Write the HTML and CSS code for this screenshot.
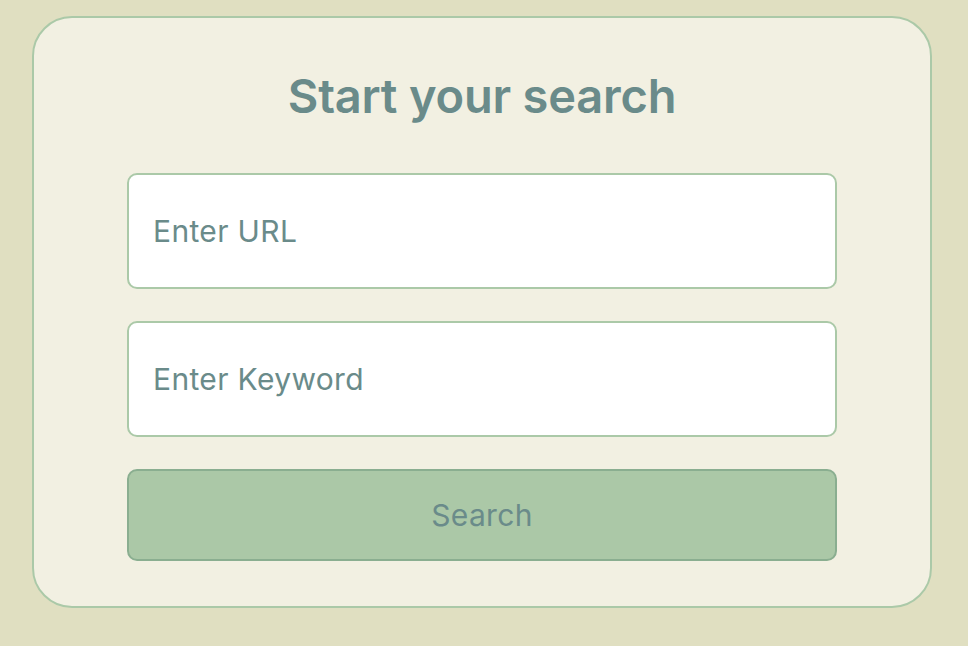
FILE: index.html
```html
<!DOCTYPE html>
<html lang="en">
<head>
<meta charset="utf-8">
<title>Start your search</title>
<link rel="stylesheet" href="styles.css">
</head>
<body>
<main class="card">
  <h1 class="title">Start your search</h1>
  <form class="form">
    <input class="field" type="text" placeholder="Enter URL">
    <input class="field" type="text" placeholder="Enter Keyword">
    <button class="btn" type="button">Search</button>
  </form>
</main>
</body>
</html>
```

FILE: styles.css
```css
* { box-sizing: border-box; }
html, body { margin: 0; padding: 0; }
body {
  background: #e0dfc1;
  font-family: Inter, "Noto Sans", sans-serif;
  padding: 16px 36px 38px 32px;
  height: 646px;
}
.card {
  width: 900px;
  height: 592px;
  background: #f2f0e2;
  border: 2px solid #abc9a8;
  border-radius: 40px;
  padding: 50px 93px 0 93px;
  display: flex;
  flex-direction: column;
  align-items: stretch;
}
.title {
  margin: 0 0 49px 0;
  text-align: center;
  color: #6a8b8a;
  font-size: 47px;
  font-weight: 600;
  line-height: 56px;
  letter-spacing: -0.2px;
}
.form {
  display: flex;
  flex-direction: column;
  gap: 32px;
}
.field {
  height: 116px;
  border: 2px solid #abc9a8;
  border-radius: 10px;
  background: #ffffff;
  padding: 0 24px;
  font-family: inherit;
  font-size: 30px;
  letter-spacing: 0.35px;
  color: #6a8b8a;
  outline: none;
}
.field::placeholder { color: #6a8b8a; opacity: 1; }
.btn {
  height: 92px;
  border: 2px solid #8aae90;
  border-radius: 10px;
  background: #abc8a7;
  color: #6a8b8a;
  font-family: inherit;
  font-size: 30px;
  letter-spacing: 0.35px;
  margin-top: 0;
}
```
